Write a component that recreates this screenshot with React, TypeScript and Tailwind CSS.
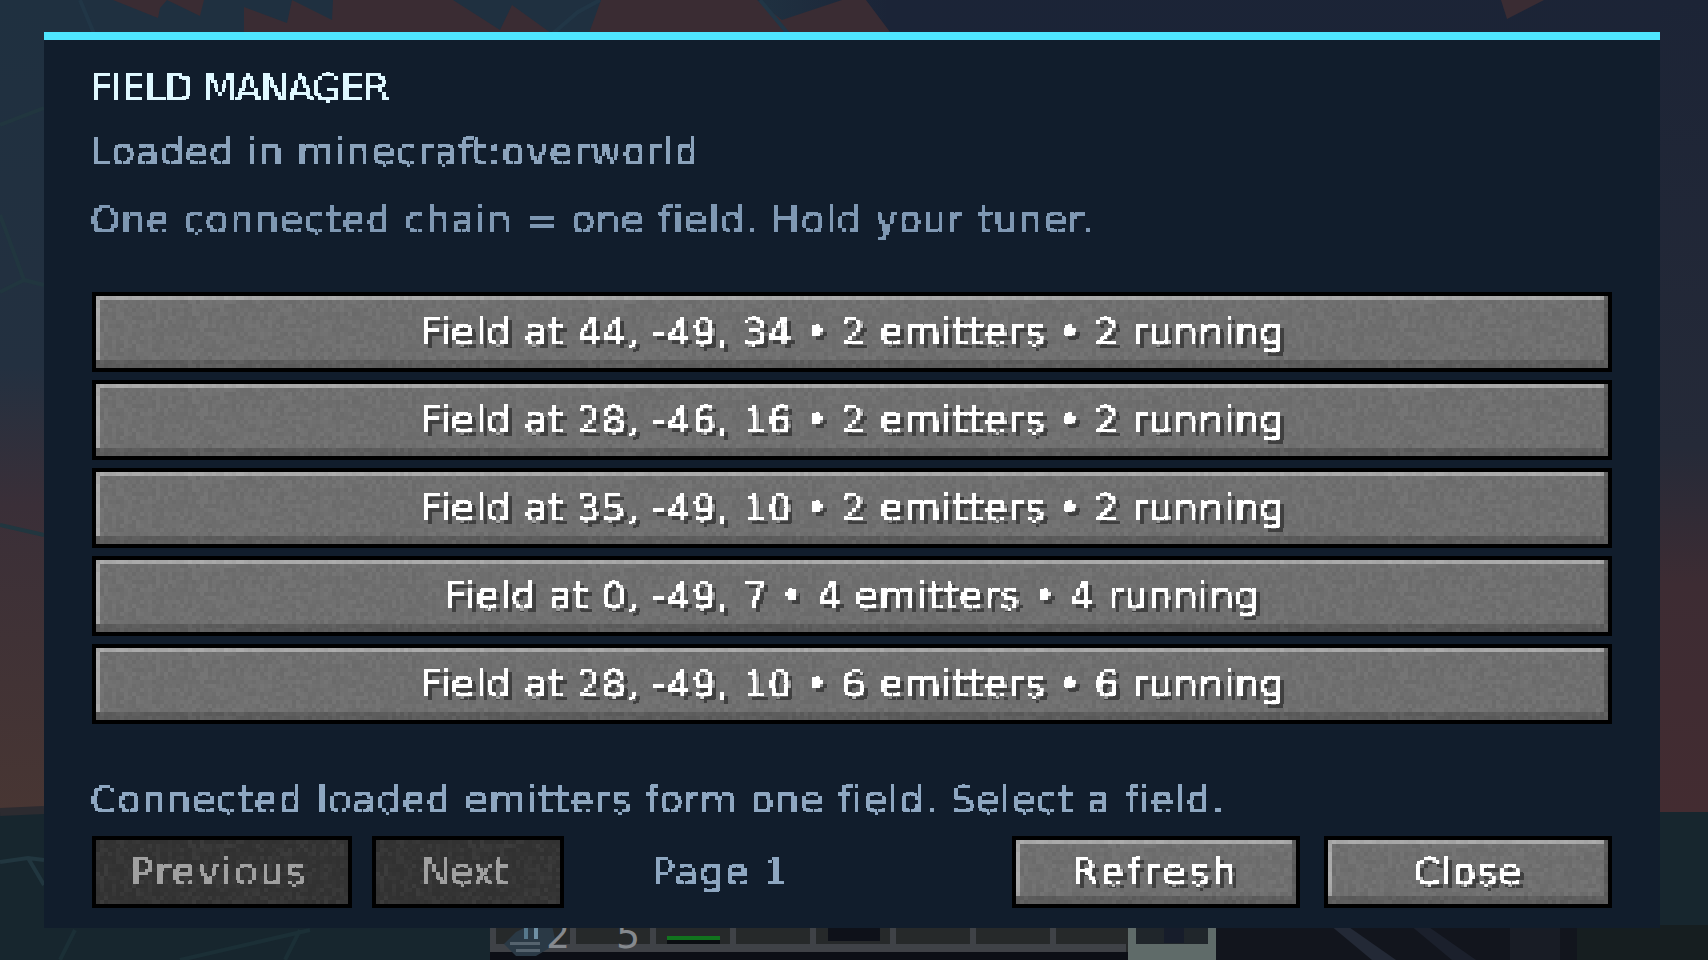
import React from 'react';

const fields = [
  'Field at 44, -49, 34 • 2 emitters • 2 running',
  'Field at 28, -46, 16 • 2 emitters • 2 running',
  'Field at 35, -49, 10 • 2 emitters • 2 running',
  'Field at 0, -49, 7 • 4 emitters • 4 running',
  'Field at 28, -49, 10 • 6 emitters • 6 running',
];

// stone texture cells, seeded so every run draws the same tile
const noise: { x: number; y: number; fill: string; opacity: number }[] = [];
let seed = 1337;
const rand = () => {
  seed = (seed * 16807) % 2147483647;
  return seed / 2147483647;
};
for (let y = 0; y < 16; y++) {
  for (let x = 0; x < 100; x++) {
    const v = rand();
    noise.push({
      x: x * 4,
      y: y * 4,
      fill: v > 0.5 ? '#ffffff' : '#000000',
      opacity: Math.abs(v - 0.5) * 0.09,
    });
  }
}

const Defs = () => (
  <svg width="0" height="0" className="absolute">
    <defs>
      <filter id="pixel" x="0" y="0" width="100%" height="100%" colorInterpolationFilters="sRGB">
        <feFlood x="1" y="1" width="2" height="2" />
        <feComposite width="4" height="4" />
        <feTile result="grid" />
        <feComposite in="SourceGraphic" in2="grid" operator="in" />
        <feComponentTransfer>
          <feFuncA type="discrete" tableValues="0 1" />
        </feComponentTransfer>
        <feMorphology operator="dilate" radius="1" />
      </filter>
      <pattern id="stone" width="400" height="64" patternUnits="userSpaceOnUse">
        {noise.map((n) => (
          <rect key={`${n.x}-${n.y}`} x={n.x} y={n.y} width="4" height="4" fill={n.fill} opacity={n.opacity} />
        ))}
      </pattern>
    </defs>
  </svg>
);

const Scene = () => (
  <svg className="absolute inset-0" width="1708" height="960" viewBox="0 0 1708 960">
    <defs>
      <linearGradient id="skyLeft" x1="0" y1="0" x2="0" y2="1">
        <stop offset="0" stopColor="#1f3040" />
        <stop offset="0.45" stopColor="#233040" />
        <stop offset="0.62" stopColor="#3a2f38" />
        <stop offset="1" stopColor="#483633" />
      </linearGradient>
      <linearGradient id="skyRight" x1="0" y1="0" x2="0" y2="1">
        <stop offset="0" stopColor="#1c2436" />
        <stop offset="0.55" stopColor="#252a38" />
        <stop offset="0.72" stopColor="#3d2c33" />
        <stop offset="1" stopColor="#432c31" />
      </linearGradient>
      <linearGradient id="sky" x1="0" y1="0" x2="1" y2="0">
        <stop offset="0" stopColor="#1f3040" />
        <stop offset="0.45" stopColor="#1f3040" />
        <stop offset="0.52" stopColor="#1b2437" />
        <stop offset="1" stopColor="#1c2436" />
      </linearGradient>
    </defs>
    <rect width="1708" height="960" fill="#1b2437" />
    <rect width="1708" height="40" fill="url(#sky)" />
    <rect y="0" width="44" height="815" fill="url(#skyLeft)" />
    <rect x="1660" y="0" width="48" height="812" fill="url(#skyRight)" />
    <rect y="812" width="1708" height="148" fill="#17262e" />
    <rect x="1000" y="925" width="708" height="35" fill="#161e20" />

    {/* red terrain showing above the panel */}
    <g fill="#3a2c33">
      <polygon points="113,0 158,18 160,8 167,0" />
      <polygon points="167,0 200,16 204,0" />
      <polygon points="244,36 244,7 287,23 292,0 332,20 333,0 453,0 500,30 512,5 555,36" />
      <polygon points="588,36 601,0 757,0 782,20 842,0 866,0 893,36" />
      <polygon points="1501,0 1544,0 1507,19" />
    </g>
    <path d="M550,36 L578,12 L600,0 M80,0 L95,36 M760,0 L790,36" stroke="#213646" strokeWidth="4" fill="none" />

    {/* faint lines on the left edge */}
    <g stroke="#21363f" strokeWidth="4" fill="none">
      <path d="M0,125 L44,108" />
      <path d="M0,215 L24,280 L0,292 M24,280 L44,285" />
      <path d="M0,525 L44,535" />
      <path d="M0,862 L28,858 L44,860 M28,858 L44,885" />
      <path d="M60,960 L75,930 M300,930 L285,960 M180,960 L310,930" stroke="#1b2f36" />
    </g>
    <path d="M0,812 L44,810" stroke="#2c2b30" strokeWidth="8" />

    {/* hotbar under the panel */}
    <rect x="490" y="925" width="726" height="35" fill="#0c0f16" />
    <rect x="494" y="925" width="636" height="27" fill="#26292a" />
    <g fill="#3f4247">
      <rect x="490" y="925" width="6" height="27" />
      <rect x="570" y="925" width="6" height="27" />
      <rect x="650" y="925" width="6" height="27" />
      <rect x="730" y="925" width="6" height="27" />
      <rect x="810" y="925" width="6" height="27" />
      <rect x="890" y="925" width="6" height="27" />
      <rect x="970" y="925" width="6" height="27" />
      <rect x="1050" y="925" width="6" height="27" />
      <rect x="490" y="944" width="636" height="8" />
    </g>
    <rect x="1128" y="925" width="88" height="35" fill="#5f6b69" />
    <rect x="1136" y="925" width="72" height="19" fill="#20262b" />
    <rect x="1164" y="925" width="20" height="18" fill="#171d2b" />

    {/* tower item in the first slot */}
    <polygon points="504,944 516,932 530,925 552,925 556,944 536,956 516,956" fill="#2a3945" />
    <rect x="524" y="925" width="4" height="14" fill="#56788c" />
    <rect x="534" y="925" width="4" height="14" fill="#6f90a4" />
    <rect x="510" y="942" width="30" height="3" fill="#55636e" />
    <rect x="516" y="949" width="24" height="3" fill="#55636e" />

    <rect x="667" y="936" width="53" height="4" fill="#11741e" />
    <rect x="667" y="940" width="53" height="4" fill="#0b0e12" />
    <rect x="828" y="925" width="52" height="16" fill="#0e1119" />
    <text x="546" y="948" fontFamily="'DejaVu Sans', sans-serif" fontSize="38" fill="#85898e">2</text>
    <text x="616" y="948" fontFamily="'DejaVu Sans', sans-serif" fontSize="38" fill="#85898e">5</text>

    {/* held item on the right */}
    <rect x="1216" y="925" width="361" height="35" fill="#12151d" />
    <polygon points="1330,925 1346,925 1396,960 1372,960" fill="#232936" />
    <polygon points="1410,925 1426,925 1476,960 1452,960" fill="#1b202c" />
    <rect x="1510" y="925" width="50" height="35" fill="#181c25" />
  </svg>
);

const Line = ({ className, children }: { className: string; children: React.ReactNode }) => (
  <div
    className={`h-[40px] whitespace-pre font-['DejaVu_Sans',sans-serif] text-[38px] leading-[40px] [filter:url(#pixel)] ${className}`}
  >
    {children}
  </div>
);

const McButton = ({
  label,
  className,
  textClass,
  disabled,
}: {
  label: string;
  className: string;
  textClass: string;
  disabled?: boolean;
}) => (
  <div className={`border-4 border-black ${className}`}>
    <div
      className={`relative flex h-full items-center ${
        disabled
          ? 'bg-[#333333]'
          : 'bg-[#6f6f6f] shadow-[inset_-4px_-8px_0_#5c5c5c,inset_4px_4px_0_#a9a9a9]'
      }`}
    >
      <svg className="absolute inset-0 h-full w-full">
        <rect width="100%" height="100%" fill="url(#stone)" />
      </svg>
      <Line
        className={`relative w-full text-center ${
          disabled ? 'text-[#a0a0a0]' : 'text-white [text-shadow:4px_4px_0_#3f3f3f]'
        } ${textClass}`}
      >
        {label}
      </Line>
    </div>
  </div>
);

export default function App() {
  return (
    <div className="relative h-[960px] w-[1708px] overflow-hidden bg-[#1b2437]">
      <Defs />
      <Scene />
      <div className="relative ml-[44px] h-[928px] w-[1616px] pt-[32px]">
        <div className="h-[896px] border-t-8 border-[#4fe6ff] bg-[#111d2c] px-[48px] pt-[28px]">
          <Line className="-ml-[2px] text-[#dff8ff] tracking-[-1px]">FIELD MANAGER</Line>
          <Line className="-ml-[2px] mt-[24px] text-[#8ba3bc] tracking-[0.95px]">Loaded in minecraft:overworld</Line>
          <Line className="-ml-[2px] mt-[28px] text-[#7f98b3] tracking-[1px]">One connected chain = one field. Hold your tuner.</Line>

          <div className="mt-[52px] flex flex-col gap-[8px]">
            {fields.map((field) => (
              <McButton key={field} label={field} className="h-[80px]" textClass="tracking-[0.8px]" />
            ))}
          </div>

          <Line className="-ml-[2px] mt-[56px] text-[#8ea7c1] tracking-[1px]">
            Connected loaded emitters form one field. Select a field.
          </Line>

          <div className="mt-[16px] flex h-[72px] items-stretch">
            <McButton label="Previous" className="w-[260px]" textClass="pr-[6px] tracking-[2px]" disabled />
            <McButton label="Next" className="ml-[20px] w-[192px]" textClass="pr-[6px] tracking-[-0.5px]" disabled />
            <div className="ml-[88px] flex items-center">
              <Line className="text-[#8ea7c1] tracking-[1.5px]">Page 1</Line>
            </div>
            <McButton label="Refresh" className="ml-auto w-[288px]" textClass="tracking-[3.4px]" />
            <McButton label="Close" className="ml-[24px] w-[288px]" textClass="tracking-[1px]" />
          </div>
        </div>
      </div>
    </div>
  );
}
